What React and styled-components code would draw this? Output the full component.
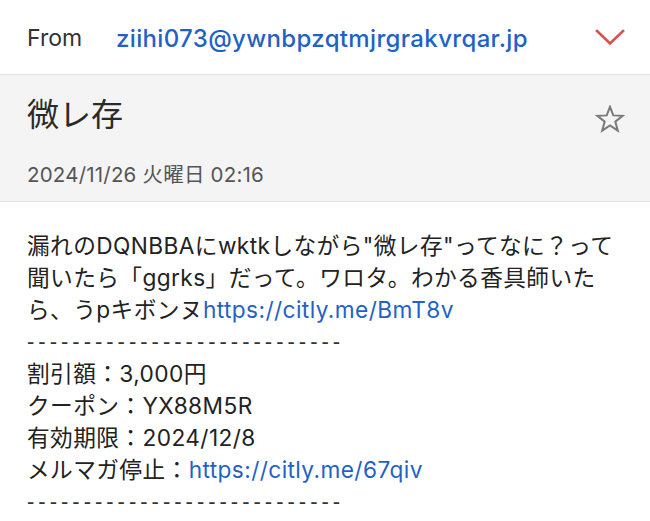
import React from "react";
import styled, { createGlobalStyle } from "styled-components";

const Global = createGlobalStyle`
  html, body { margin: 0; padding: 0; background: #ffffff; }
  body {
    font-family: Inter, "Noto Sans CJK JP", sans-serif;
    color: #222;
    -webkit-font-smoothing: antialiased;
  }
`;

const Page = styled.div`
  width: 650px;
  display: flex;
  flex-direction: column;
`;

const Header = styled.header`
  height: 75px;
  box-sizing: border-box;
  display: flex;
  align-items: center;
  padding: 2px 25px 0 27px;
  border-bottom: 1px solid #e2e2e2;
`;

const FromLabel = styled.span`
  width: 89px;
  font-size: 23px;
  color: #333;
`;

const Email = styled.span`
  flex: 1;
  font-size: 24px;
  font-weight: 500;
  letter-spacing: 0.35px;
  color: #1f62c7;
  white-space: nowrap;
`;

const IconBox = styled.span`
  display: flex;
  align-items: center;
  justify-content: center;
  width: 30px;
  margin-top: ${(p) => p.$offset || 0}px;
`;

const Meta = styled.section`
  background: #f4f4f4;
  border-bottom: 1px solid #e2e2e2;
  padding: 20px 25px 13px 27px;
  display: flex;
  flex-direction: column;
  gap: 27px;
`;

const SubjectRow = styled.div`
  display: flex;
  align-items: center;
  justify-content: space-between;
`;

const Subject = styled.h1`
  margin: 0;
  font-weight: 400;
  font-size: 32px;
  line-height: 40px;
  color: #2a2a2a;
`;

const DateText = styled.div`
  font-size: 20.5px;
  letter-spacing: 0.2px;
  line-height: 26px;
  color: #555;
`;

const Body = styled.main`
  padding: 28px 27px 0 27px;
  font-size: 22.7px;
  letter-spacing: 0.4px;
  line-height: 32px;
  color: #222;
`;

const Line = styled.div`
  white-space: nowrap;
`;

const Dashes = styled.div`
  font-family: "Liberation Sans", sans-serif;
  font-size: 22px;
  letter-spacing: 4px;
  line-height: 32px;
  color: #333;
  white-space: nowrap;
`;

const Link = styled.a`
  color: #1f62c7;
  text-decoration: none;
`;

const Chevron = () => (
  <svg width="30" height="18" viewBox="0 0 30 18" fill="none">
    <path d="M2 3 L15 15.5 L28 3" stroke="#d6514c" strokeWidth="2.6" strokeLinecap="square" />
  </svg>
);

const Star = () => (
  <svg width="30" height="28" viewBox="0 0 30 28" fill="none">
    <path
      d="M15 1.8 L18.3 10.4 L27.6 10.8 L20.3 16.6 L22.8 25.6 L15 20.4 L7.2 25.6 L9.7 16.6 L2.4 10.8 L11.7 10.4 Z"
      stroke="#7a7a7a"
      strokeWidth="2"
      strokeLinejoin="miter"
    />
  </svg>
);

const DASH = "----------------------------";

export default function App() {
  return (
    <Page>
      <Global />
      <Header>
        <FromLabel>From</FromLabel>
        <Email>ziihi073@ywnbpzqtmjrgrakvrqar.jp</Email>
        <IconBox $offset={-2}>
          <Chevron />
        </IconBox>
      </Header>
      <Meta>
        <SubjectRow>
          <Subject>微レ存</Subject>
          <IconBox $offset={8}>
            <Star />
          </IconBox>
        </SubjectRow>
        <DateText>2024/11/26 火曜日 02:16</DateText>
      </Meta>
      <Body>
        <Line>漏れのDQNBBAにwktkしながら"微レ存"ってなに？って</Line>
        <Line>聞いたら「ggrks」だって。ワロタ。わかる香具師いた</Line>
        <Line>
          ら、うpキボンヌ<Link href="#">https://citly.me/BmT8v</Link>
        </Line>
        <Dashes>{DASH}</Dashes>
        <Line>割引額：3,000円</Line>
        <Line>クーポン：YX88M5R</Line>
        <Line>有効期限：2024/12/8</Line>
        <Line>
          メルマガ停止：<Link href="#">https://citly.me/67qiv</Link>
        </Line>
        <Dashes>{DASH}</Dashes>
      </Body>
    </Page>
  );
}
